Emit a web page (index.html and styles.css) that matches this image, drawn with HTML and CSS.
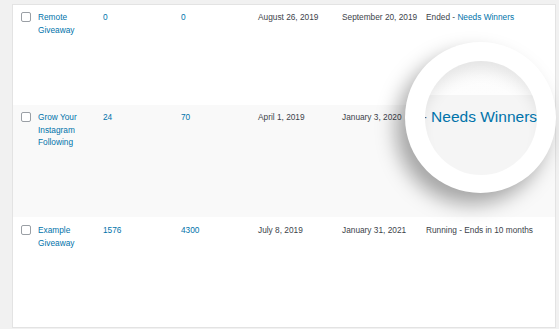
FILE: index.html
```html
<!DOCTYPE html>
<html>
<head>
<meta charset="utf-8">
<link rel="stylesheet" href="styles.css">
</head>
<body>
<div class="page">
  <div class="card">
    <div class="row">
      <div class="cell"><span class="cb"></span></div>
      <div class="cell name link">Remote Giveaway</div>
      <div class="cell link">0</div>
      <div class="cell link">0</div>
      <div class="cell">August 26, 2019</div>
      <div class="cell">September 20, 2019</div>
      <div class="cell status">Ended - <span class="link">Needs Winners</span></div>
    </div>
    <div class="row alt">
      <div class="cell"><span class="cb"></span></div>
      <div class="cell name link">Grow Your Instagram Following</div>
      <div class="cell link">24</div>
      <div class="cell link">70</div>
      <div class="cell">April 1, 2019</div>
      <div class="cell">January 3, 2020</div>
      <div class="cell status">Ended - <span class="link">Needs Winners</span></div>
    </div>
    <div class="row last">
      <div class="cell"><span class="cb"></span></div>
      <div class="cell name link">Example Giveaway</div>
      <div class="cell link">1576</div>
      <div class="cell link">4300</div>
      <div class="cell">July 8, 2019</div>
      <div class="cell">January 31, 2021</div>
      <div class="cell status">Running - Ends in 10 months</div>
    </div>
  </div>
  <div class="magnifier">
    <div class="lens">
      <span class="lens-text">Ended - <span class="link">Needs Winners</span></span>
    </div>
  </div>
</div>
</body>
</html>
```
FILE: styles.css
```css
html, body {
  margin: 0;
  padding: 0;
  background: #f1f1f1;
  font-family: "Liberation Sans", Arial, Helvetica, sans-serif;
  overflow: hidden;
}
.page {
  position: relative;
  width: 559px;
  height: 329px;
  padding: 4px 3px 0 12px;
  box-sizing: border-box;
}
.card {
  background: #fff;
  border: 1px solid #e3e3e3;
  height: 324px;
  box-sizing: border-box;
  display: grid;
  grid-template-rows: 100px 112px 110px;
}
.row {
  display: grid;
  grid-template-columns: 17px 65px 78px 77px 84px 84px 1fr;
  padding: 6px 0 0 8px;
  font-size: 8.3px;
  line-height: 12.5px;
  color: #3c434a;
}
.row.alt { background: #f9f9f9; }
.row.last { padding-top: 7px; }
.cell { padding-right: 6px; white-space: nowrap; }
.cell.name { white-space: normal; padding-right: 9px; }
.cell.status { padding-right: 0; }
.link { color: #0073aa; }
.cb {
  display: block;
  width: 10px;
  height: 10px;
  margin-top: 1px;
  border: 1px solid #9a9fa5;
  border-radius: 2px;
  box-sizing: border-box;
  background: #fff;
}
.magnifier {
  position: absolute;
  left: 405px;
  top: 42px;
  width: 151px;
  height: 151px;
  border-radius: 50%;
  background: #fff;
  box-shadow: -9px 11px 20px rgba(0, 0, 0, 0.34);
  display: flex;
  align-items: center;
  justify-content: center;
}
.lens {
  position: relative;
  width: 112px;
  height: 114px;
  border-radius: 50%;
  overflow: hidden;
  background: linear-gradient(to bottom, #fcfcfc 0, #fdfdfd 30%, #f5f5f5 30%, #f5f5f5 100%);
  box-shadow: inset 0 14px 16px -6px rgba(0, 0, 0, 0.1);
}
.lens-text {
  position: absolute;
  left: -52px;
  top: 47px;
  font-size: 15.5px;
  line-height: 18px;
  white-space: nowrap;
  color: #50575e;
}
```
